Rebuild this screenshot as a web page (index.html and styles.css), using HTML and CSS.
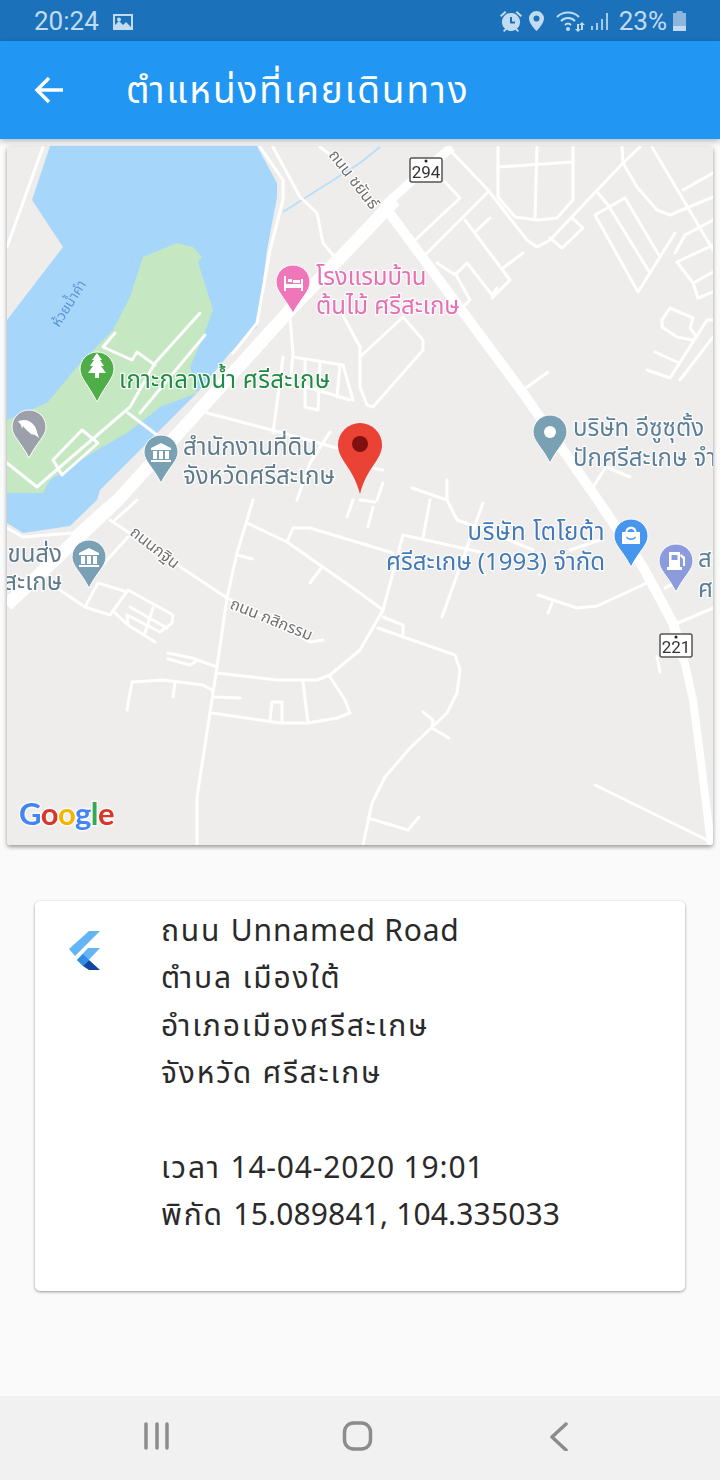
FILE: index.html
```html
<!DOCTYPE html>
<html lang="th">
<head>
<meta charset="utf-8">
<title>ตำแหน่งที่เคยเดินทาง</title>
<link rel="stylesheet" href="styles.css">
</head>
<body>
<div class="phone">
  <header class="status-bar">
    <div class="status-left">
      <span class="status-time">20:24</span>
      <svg class="status-icon" width="22" height="18" viewBox="0 0 22 18"><path class="fill-status" fill-rule="evenodd" d="M1 1h20v16H1zM3 3v9l4-4 4 4 3-3 5 5V3zM7 4.500a2 2 0 1 1 0 4 2 2 0 0 1 0-4z"/></svg>
    </div>
    <div class="status-right">
      <svg class="status-icon" width="24" height="24" viewBox="0 0 24 24"><path class="fill-status" fill-rule="evenodd" d="M12 4a9 9 0 0 1 6 15.700l2 2-1.300 1.300-2.300-2.200a9 9 0 0 1-8.800 0L5.300 23 4 21.700l2-2A9 9 0 0 1 12 4zM11 8v6.500h5v-2h-3V8zM1 6.500 6 2l1.300 1.400-5 4.500zM23 6.500 18 2l-1.300 1.400 5 4.500z"/></svg>
      <svg class="status-icon icon-pin" width="17" height="22" viewBox="0 0 17 22"><path class="fill-status" fill-rule="evenodd" d="M8.500 1a7.500 7.500 0 0 1 7.500 7.500C16 14 8.500 21 8.500 21S1 14 1 8.500A7.500 7.500 0 0 1 8.500 1zm0 4.500a3 3 0 1 0 0 6 3 3 0 0 0 0-6z"/></svg>
      <svg class="status-icon icon-wifi" width="30" height="24" viewBox="0 0 30 24"><path class="stroke-status" d="M2 8c6-6 16-6 22 0M6 12c4-4 10-4 14 0M10 16c2-2 4-2 6 0"/><circle class="fill-status" cx="13" cy="20" r="2"/><path class="fill-status" d="M22 15h2v5h2l-3 3-3-3h2zM27 13l3 3h-2v5h-2v-5h-2z"/></svg>
      <svg class="status-icon icon-signal" width="19" height="22" viewBox="0 0 19 22"><path class="bars-status" d="M2 16v4M7 13v7M12 9v11M17 3v17"/></svg>
      <span class="status-pct">23%</span>
      <svg class="status-icon" width="15" height="22" viewBox="0 0 15 22"><path class="fill-battery" d="M4.500 1h6v2h3.500v18H1V3h3.500z"/><path class="fill-status" d="M1 16h13v5H1z"/></svg>
    </div>
  </header>

  <div class="app-bar">
    <svg class="back-arrow" width="30" height="28" viewBox="0 0 30 28"><path d="M29 14H3M15 2 3 14l12 12"/></svg>
    <h1 class="app-title">ตำแหน่งที่เคยเดินทาง</h1>
  </div>

  <main class="content">
    <section class="map-card">
      <svg class="map" width="706" height="699" viewBox="7 146 706 699">
        <rect class="land" x="7" y="146" width="706" height="699"/>
        <polygon class="water" points="50,146 257,146 277,183 277,197 267,250 257,327 230,353 197,393 157,433 100,490 97,500 70,526 23,533 7,523 7,320 63,247 32,200"/>
        <polygon class="island" points="7,420 47,403 77,367 113,330 130,297 143,257 177,243 193,247 202,257 198,262 213,310 203,337 190,367 197,393 160,407 127,433 97,450 50,480 43,493 7,493"/>
        <polyline class="stream" points="283,212 360,163 380,147"/>

        <g class="road">
          <polyline points="43,147 7,247"/>
          <polyline points="260,147 283,180 283,200 270,250 257,323 233,353"/>
          <polyline points="273,147 300,197 317,213 323,243 333,255"/>
          <polyline points="320,147 347,167"/>
          <polyline points="200,313 155,363 130,407 53,473 37,487 7,463"/>
          <polyline points="205,335 140,413"/>
          <polyline points="115,333 103,347 132,360 137,352 155,365"/>
          <polygon points="82,430 53,460 62,475 98,443"/>
          <polyline points="128,413 157,435"/>
          <polyline points="293,357 343,365 353,400"/>
          <polyline points="305,360 305,407 318,410 320,363"/>
          <polyline points="340,365 337,397"/>
          <polyline points="307,387 350,400"/>
          <polyline points="283,357 273,433"/>
          <polyline points="290,317 293,353 290,387"/>
          <polyline points="207,413 283,433 333,447 360,453"/>
          <polyline points="330,432 310,463 297,500"/>
          <polyline points="340,310 360,347"/>
          <polyline points="450,150 488,190 527,240 537,247 550,240 623,163 640,147"/>
          <polyline points="498,147 498,197 515,217 537,220 557,218 573,200 573,147"/>
          <polyline points="498,167 573,162"/>
          <polyline points="537,147 535,218"/>
          <polyline points="550,238 562,248 583,228 572,218"/>
          <polygon points="595,215 625,198 660,257 638,292"/>
          <polyline points="608,205 650,273"/>
          <polyline points="598,193 608,205"/>
          <polyline points="660,257 675,233"/>
          <polyline points="622,147 623,163 637,187 657,210 670,215 713,197"/>
          <polyline points="652,147 713,250"/>
          <polyline points="683,190 713,173"/>
          <polyline points="675,253 685,235 713,220"/>
          <polyline points="677,262 713,245"/>
          <polyline points="677,262 693,283 713,272"/>
          <polyline points="693,283 698,298 713,292"/>
          <polyline points="713,320 707,320 670,378 647,370"/>
          <polyline points="680,380 713,337"/>
          <polyline points="655,352 677,362"/>
          <polygon points="670,308 693,318 690,328 697,337 692,340 677,337 662,327 662,320"/>
          <polyline points="412,243 460,198 445,182"/>
          <polyline points="423,257 488,192"/>
          <polyline points="465,220 510,280 492,298"/>
          <polyline points="475,232 490,218"/>
          <polyline points="503,268 523,253"/>
          <polyline points="437,263 455,275 467,263 492,295 497,288"/>
          <polyline points="455,273 470,300 460,310"/>
          <polyline points="523,390 548,372"/>
          <polyline points="360,357 403,317 423,340 423,350 373,407 367,405 360,387 360,347"/>
          <polyline points="7,528 23,537 73,533 110,500"/>
          <polyline points="115,520 137,500"/>
          <polyline points="110,520 227,598 310,642 323,640"/>
          <polyline points="253,500 237,553 227,598 217,667 197,797 197,845"/>
          <polyline points="247,523 287,542 360,593 383,610"/>
          <polyline points="287,542 293,528 310,528 360,543 393,553"/>
          <polyline points="237,555 253,559"/>
          <polyline points="322,567 310,583"/>
          <polyline points="60,590 85,607 110,615 128,590 173,615 172,623 160,632 127,615 128,625 155,642"/>
          <polyline points="85,607 98,583 127,592"/>
          <polyline points="130,607 167,628"/>
          <polyline points="153,608 145,633"/>
          <polyline points="115,613 128,625"/>
          <polyline points="128,537 98,570"/>
          <polyline points="168,653 192,658 217,667"/>
          <polyline points="168,659 190,665 195,662"/>
          <polyline points="217,673 277,680 317,680 330,675 360,650 383,610 403,535 480,552"/>
          <polyline points="127,710 132,682 163,680 203,685 212,690"/>
          <polyline points="175,683 173,697"/>
          <polyline points="213,697 240,698"/>
          <polyline points="212,713 280,723 308,723 337,718 350,713 345,700 330,677"/>
          <polyline points="303,682 308,723"/>
          <polyline points="270,720 272,702 282,702 282,722"/>
          <polyline points="430,500 423,538"/>
          <polyline points="483,503 442,617"/>
          <polyline points="383,617 403,625 403,635"/>
          <polyline points="378,628 455,655 460,670 457,693 447,713 410,748 385,777 372,803 363,845"/>
          <polyline points="423,712 433,720 432,728 449,738"/>
          <polyline points="368,818 408,830 419,817"/>
          <polyline points="538,595 577,608 597,606 647,583"/>
          <polyline points="552,603 548,613"/>
          <polyline points="665,588 680,580"/>
          <polyline points="678,623 713,608"/>
          <polyline points="657,657 660,672"/>
          <polyline points="595,785 707,840"/>
          <polyline points="447,500 457,520 493,533 533,550"/>
          <polyline points="570,550 600,540"/>
          <polyline points="347,517 353,500"/>
          <polyline points="412,488 447,500"/>
          <polyline points="447,480 447,500"/>
          <polyline points="383,483 377,500"/>
          <polyline points="360,500 375,502"/>
          <polyline points="368,527 373,507"/>
          <polyline points="372,468 383,470"/>
          <polyline points="593,487 606,467 630,477"/>
        </g>
        <polyline class="road-upper" points="385,205 415,178 452,147"/>
        <polyline class="road-main" points="7,605 118,500 290,310 360,237 395,200"/>
        <polyline class="road-second" points="385,207 523,393 593,493 643,567 673,623 684,660"/>
        <polyline class="road-lower" points="684,660 693,700 702,770 711,845"/>

        <g class="road-label">
          <text transform="translate(328,155) rotate(52)">ถนน ชยันธ์</text>
          <text transform="translate(129,534) rotate(38)">ถนนกฐิน</text>
          <text transform="translate(229,608) rotate(22)">ถนน กสิกรรม</text>
        </g>
        <text class="water-label" transform="translate(59,328) rotate(-58)">ห้วยน้ำคำ</text>

        <g class="shield">
          <rect x="410" y="158" width="32" height="24" rx="2"/>
          <circle cx="426" cy="161" r="1.500"/>
          <text x="426" y="178">294</text>
          <rect x="660" y="634" width="32" height="23" rx="2"/>
          <circle cx="676" cy="637" r="1.500"/>
          <text x="676" y="653">221</text>
        </g>

        <!-- points of interest -->
        <path class="pin pin-hotel" d="M293 265a17 17 0 0 1 17 17c0 9-8 15-17 31-9-16-17-22-17-31a17 17 0 0 1 17-17z"/>
        <path class="glyph" d="M284 276h2v8h15v-5h2v12h-2v-3h-15v3h-2zM288 279h4v3h-4zM293 280h7v3h-7z"/>
        <path class="pin pin-park" d="M97 352a17 17 0 0 1 17 17c0 9-8 15-17 33-9-18-17-24-17-33a17 17 0 0 1 17-17z"/>
        <path class="glyph" d="M97 353l5 7h-2l4 6h-3l5 7h-7v5h-4v-5h-7l5-7h-3l4-6h-2z"/>
        <path class="pin pin-dolphin" d="M29 410a17 17 0 0 1 17 17c0 9-9 15-17 31-8-16-17-22-17-31a17 17 0 0 1 17-17z"/>
        <path class="glyph" d="M18 421l6-1c7 0 12 6 13 12l2 6-4-3-4-1c-3-3-6-5-8-8l-1 3-1-4z"/>
        <path class="pin pin-civic" d="M161 435a17 17 0 0 1 17 17c0 9-9 15-17 31-8-16-17-22-17-31a17 17 0 0 1 17-17z"/>
        <path class="glyph" d="M161 443l10 5v2h-20v-2zM153 451h4v8h-4zM159 451h4v8h-4zM165 451h4v8h-4zM151 460h20v2h-20z"/>
        <path class="pin pin-civic" d="M89 540a17 17 0 0 1 17 17c0 9-9 15-17 31-8-16-17-22-17-31a17 17 0 0 1 17-17z"/>
        <path class="glyph" d="M89 548l10 5v2h-20v-2zM81 556h4v8h-4zM87 556h4v8h-4zM93 556h4v8h-4zM79 565h20v2h-20z"/>
        <path class="pin pin-civic" d="M550 415a17 17 0 0 1 17 17c0 9-9 15-17 31-8-16-17-22-17-31a17 17 0 0 1 17-17z"/>
        <circle class="glyph" cx="550" cy="432" r="6"/>
        <path class="pin pin-shop" d="M631 519a17 17 0 0 1 17 17c0 9-9 15-17 31-8-16-17-22-17-31a17 17 0 0 1 17-17z"/>
        <path class="glyph" fill-rule="evenodd" d="M622 532h3.500c0-7 11-7 11 0h3.500v12h-18zM627.500 532h7c0-4-7-4-7 0zM626 537c1 4 9 4 10 0l-1-.500c-1 2.500-7 2.500-8 0z"/>
        <path class="pin pin-fuel" d="M676 544a17 17 0 0 1 17 17c0 9-9 15-17 31-8-16-17-22-17-31a17 17 0 0 1 17-17z"/>
        <path class="glyph" fill-rule="evenodd" d="M669 552h11v15h2v3h-15v-3h2zM671.500 555v5h6v-5zM681 554l4 3v9h-2v-7l-3-3z"/>

        <!-- labels -->
        <g class="poi-label">
          <text class="label-hotel"><tspan x="316" y="285">โรงแรมบ้าน</tspan><tspan x="316" y="314">ต้นไม้ ศรีสะเกษ</tspan></text>
          <text class="label-park" x="119" y="388">เกาะกลางน้ำ ศรีสะเกษ</text>
          <text class="label-civic"><tspan x="183" y="455">สำนักงานที่ดิน</tspan><tspan x="183" y="484">จังหวัดศรีสะเกษ</tspan></text>
          <text class="label-civic label-end"><tspan x="62" y="562">ขนส่ง</tspan><tspan x="62" y="590">สะเกษ</tspan></text>
          <text class="label-company"><tspan x="573" y="436">บริษัท อีซูซุตั้ง</tspan><tspan x="573" y="466">ปักศรีสะเกษ จำกัด</tspan></text>
          <text class="label-shop label-end"><tspan class="label-wide" x="605" y="540">บริษัท โตโยต้า</tspan><tspan x="605" y="570">ศรีสะเกษ (1993) จำกัด</tspan></text>
          <text class="label-company"><tspan x="698" y="567">สถานี</tspan><tspan x="698" y="597">ศรี</tspan></text>
        </g>

        <!-- selected position -->
        <path class="pin-red" d="M360 423a22 22 0 0 1 22 22c0 15-15 22-22 49-7-27-22-34-22-49a22 22 0 0 1 22-22z"/>
        <circle class="pin-red-dot" cx="360" cy="444" r="8"/>

        <text class="google" x="19" y="825"><tspan class="g-blue">G</tspan><tspan class="g-red">o</tspan><tspan class="g-yellow">o</tspan><tspan class="g-blue">g</tspan><tspan class="g-green">l</tspan><tspan class="g-red">e</tspan></text>
      </svg>
    </section>

    <section class="info-card">
      <svg class="flutter" width="32" height="40" viewBox="0 0 32 40"><path class="fl-light" d="M0 19 20 1h11L6 26z"/><path class="fl-light" d="M8 30l11-12h12L14 36z"/><path class="fl-mid" d="M8 30l6-6 6 6-6 6z"/><path class="fl-dark" d="M14 36l6-6 11 10H20z"/></svg>
      <div class="info-text">
        <div>ถนน <span class="latin">Unnamed Road</span></div>
        <div>ตำบล เมืองใต้</div>
        <div>อำเภอเมืองศรีสะเกษ</div>
        <div>จังหวัด ศรีสะเกษ</div>
        <div>&nbsp;</div>
        <div>เวลา <span class="latin">14-04-2020 19:01</span></div>
        <div>พิกัด <span class="digits">15.089841, 104.335033</span></div>
      </div>
    </section>
  </main>

  <nav class="nav-bar">
    <svg width="30" height="30" viewBox="0 0 30 30" class="nav-recents"><path d="M4 3v24M15 3v24M25 3v24"/></svg>
    <svg width="32" height="32" viewBox="0 0 32 32" class="nav-home"><rect x="2.500" y="3" width="26" height="26" rx="9"/></svg>
    <svg width="20" height="30" viewBox="0 0 20 30" class="nav-back"><path d="M17 3 3 16l14 13"/></svg>
  </nav>
</div>
</body>
</html>
```

FILE: styles.css
```css
* { box-sizing: border-box; }
html, body { margin: 0; padding: 0; }
body {
  background: #fafafa;
  font-family: "Noto Sans Thai", "Noto Sans", "Open Sans", sans-serif;
}
.phone {
  width: 720px;
  height: 1480px;
  display: flex;
  flex-direction: column;
  overflow: hidden;
  background: #fafafa;
}

/* status bar */
.status-bar {
  height: 41px;
  flex: none;
  background: #1b72bb;
  color: #c3dbf0;
  display: flex;
  align-items: center;
  justify-content: space-between;
  padding: 0 33px 0 34px;
  font-family: Roboto, sans-serif;
  font-size: 26px;
}
.status-left, .status-right { display: flex; align-items: center; }
.status-left { gap: 13px; }
.status-right { gap: 5px; }
.status-icon { display: block; flex: none; }
.icon-wifi { margin-left: 5px; }
.icon-signal { margin-right: 5px; }
.status-left .status-icon { margin-top: 3px; }
.fill-status { fill: #c3dbf0; }
.fill-battery { fill: #8cb6db; }
.stroke-status { fill: none; stroke: #c3dbf0; stroke-width: 2; }
.bars-status { fill: none; stroke: #a8c9e6; stroke-width: 2; }

/* app bar */
.app-bar {
  height: 98px;
  flex: none;
  position: relative;
  z-index: 2;
  display: flex;
  align-items: center;
  padding-left: 34px;
  background: #2196f3;
  box-shadow: 0 2px 6px rgba(0, 0, 0, .28);
}
.back-arrow { fill: none; stroke: #fff; stroke-width: 3.500; flex: none; }
.app-title {
  margin: 3px 0 0 62px;
  font-size: 37px;
  font-weight: 400;
  letter-spacing: 1.900px;
  color: #fff;
}

/* content */
.content {
  flex: 1;
  padding: 7px 7px 0;
}
.map-card {
  height: 699px;
  box-shadow: 0 2px 4px rgba(0, 0, 0, .4);
  border-radius: 3px;
  overflow: hidden;
}
.map { display: block; filter: blur(.4px); }
.land { fill: #eeedeb; }
.water { fill: #a6d7fb; }
.island { fill: #c5e7c2; }
.stream { fill: none; stroke: #b9dff8; stroke-width: 2; }
.road polyline, .road polygon {
  fill: none;
  stroke: #fff;
  stroke-width: 3;
  stroke-linejoin: round;
  stroke-linecap: round;
}
.road-upper, .road-main, .road-second, .road-lower { fill: none; stroke: #fff; stroke-linejoin: round; }
.road-upper { stroke-width: 9; }
.road-main { stroke-width: 13; }
.road-second { stroke-width: 10; }
.road-lower { stroke-width: 8; }
.road-label text {
  font-size: 16px;
  fill: #6f6f6f;
  stroke: #fff;
  stroke-width: 2.500;
  paint-order: stroke;
}
.water-label {
  font-size: 14px;
  fill: #5d95d6;
}
.shield rect { fill: #fff; stroke: #555; stroke-width: 1.500; }
.shield circle { fill: #222; }
.shield text {
  font-family: Roboto, sans-serif;
  font-size: 17px;
  fill: #333;
  text-anchor: middle;
}
.pin { stroke: #fff; stroke-width: 1; }
.pin-hotel { fill: #ee76b9; }
.pin-park { fill: #4fae48; }
.pin-dolphin { fill: #9ba0ab; }
.pin-civic { fill: #7aa0b4; }
.pin-shop { fill: #4796ee; }
.pin-fuel { fill: #8c9ade; }
.glyph { fill: #fff; }
.poi-label text {
  font-size: 24px;
  stroke: #fff;
  stroke-width: 2.500;
  stroke-opacity: .85;
  paint-order: stroke;
}
.label-end { text-anchor: end; }
.label-wide { letter-spacing: .6px; }
.label-hotel { fill: #e66fb5; }
.label-park { fill: #1f8a45; letter-spacing: .3px; }
.label-civic { fill: #5f7a8a; }
.label-company { fill: #5c7f99; }
.label-shop { fill: #4279b8; }
.pin-red { fill: #ea4335; }
.pin-red-dot { fill: #7f1110; }
.google {
  font-family: Lato, sans-serif;
  font-size: 31px;
  font-weight: 700;
  letter-spacing: -.6px;
  stroke: #fff;
  stroke-width: 3;
  stroke-opacity: .7;
  paint-order: stroke;
}
.g-blue { fill: #4285f4; }
.g-red { fill: #d9372b; }
.g-yellow { fill: #f4b400; }
.g-green { fill: #34a853; }

/* info card */
.info-card {
  width: 650px;
  height: 390px;
  margin: 56px 0 0 28px;
  padding: 6px 0 0 33px;
  display: flex;
  background: #fff;
  border-radius: 5px;
  box-shadow: 0 1px 3px rgba(0, 0, 0, .4);
}
.flutter { flex: none; margin-top: 23px; margin-left: 1px; }
.fl-light { fill: #64b5f6; }
.fl-mid { fill: #2f8fe8; }
.fl-dark { fill: #0f47a1; }
.info-text {
  margin-left: 60px;
  padding-top: 2px;
  font-size: 30px;
  line-height: 47.330px;
  letter-spacing: 1.800px;
  color: #2a2a2a;
  white-space: nowrap;
}
.latin { letter-spacing: .8px; }
.digits { letter-spacing: .15px; }

/* navigation */
.nav-bar {
  height: 84px;
  flex: none;
  background: #f1f1f1;
  display: flex;
  align-items: center;
  padding: 0 0 4px 142px;
}
.nav-bar svg { fill: none; stroke: #8c8c8c; stroke-width: 3.500; stroke-linecap: round; stroke-linejoin: round; display: block; }
.nav-home { margin-left: 170px; }
.nav-back { margin-left: 175px; }
```
